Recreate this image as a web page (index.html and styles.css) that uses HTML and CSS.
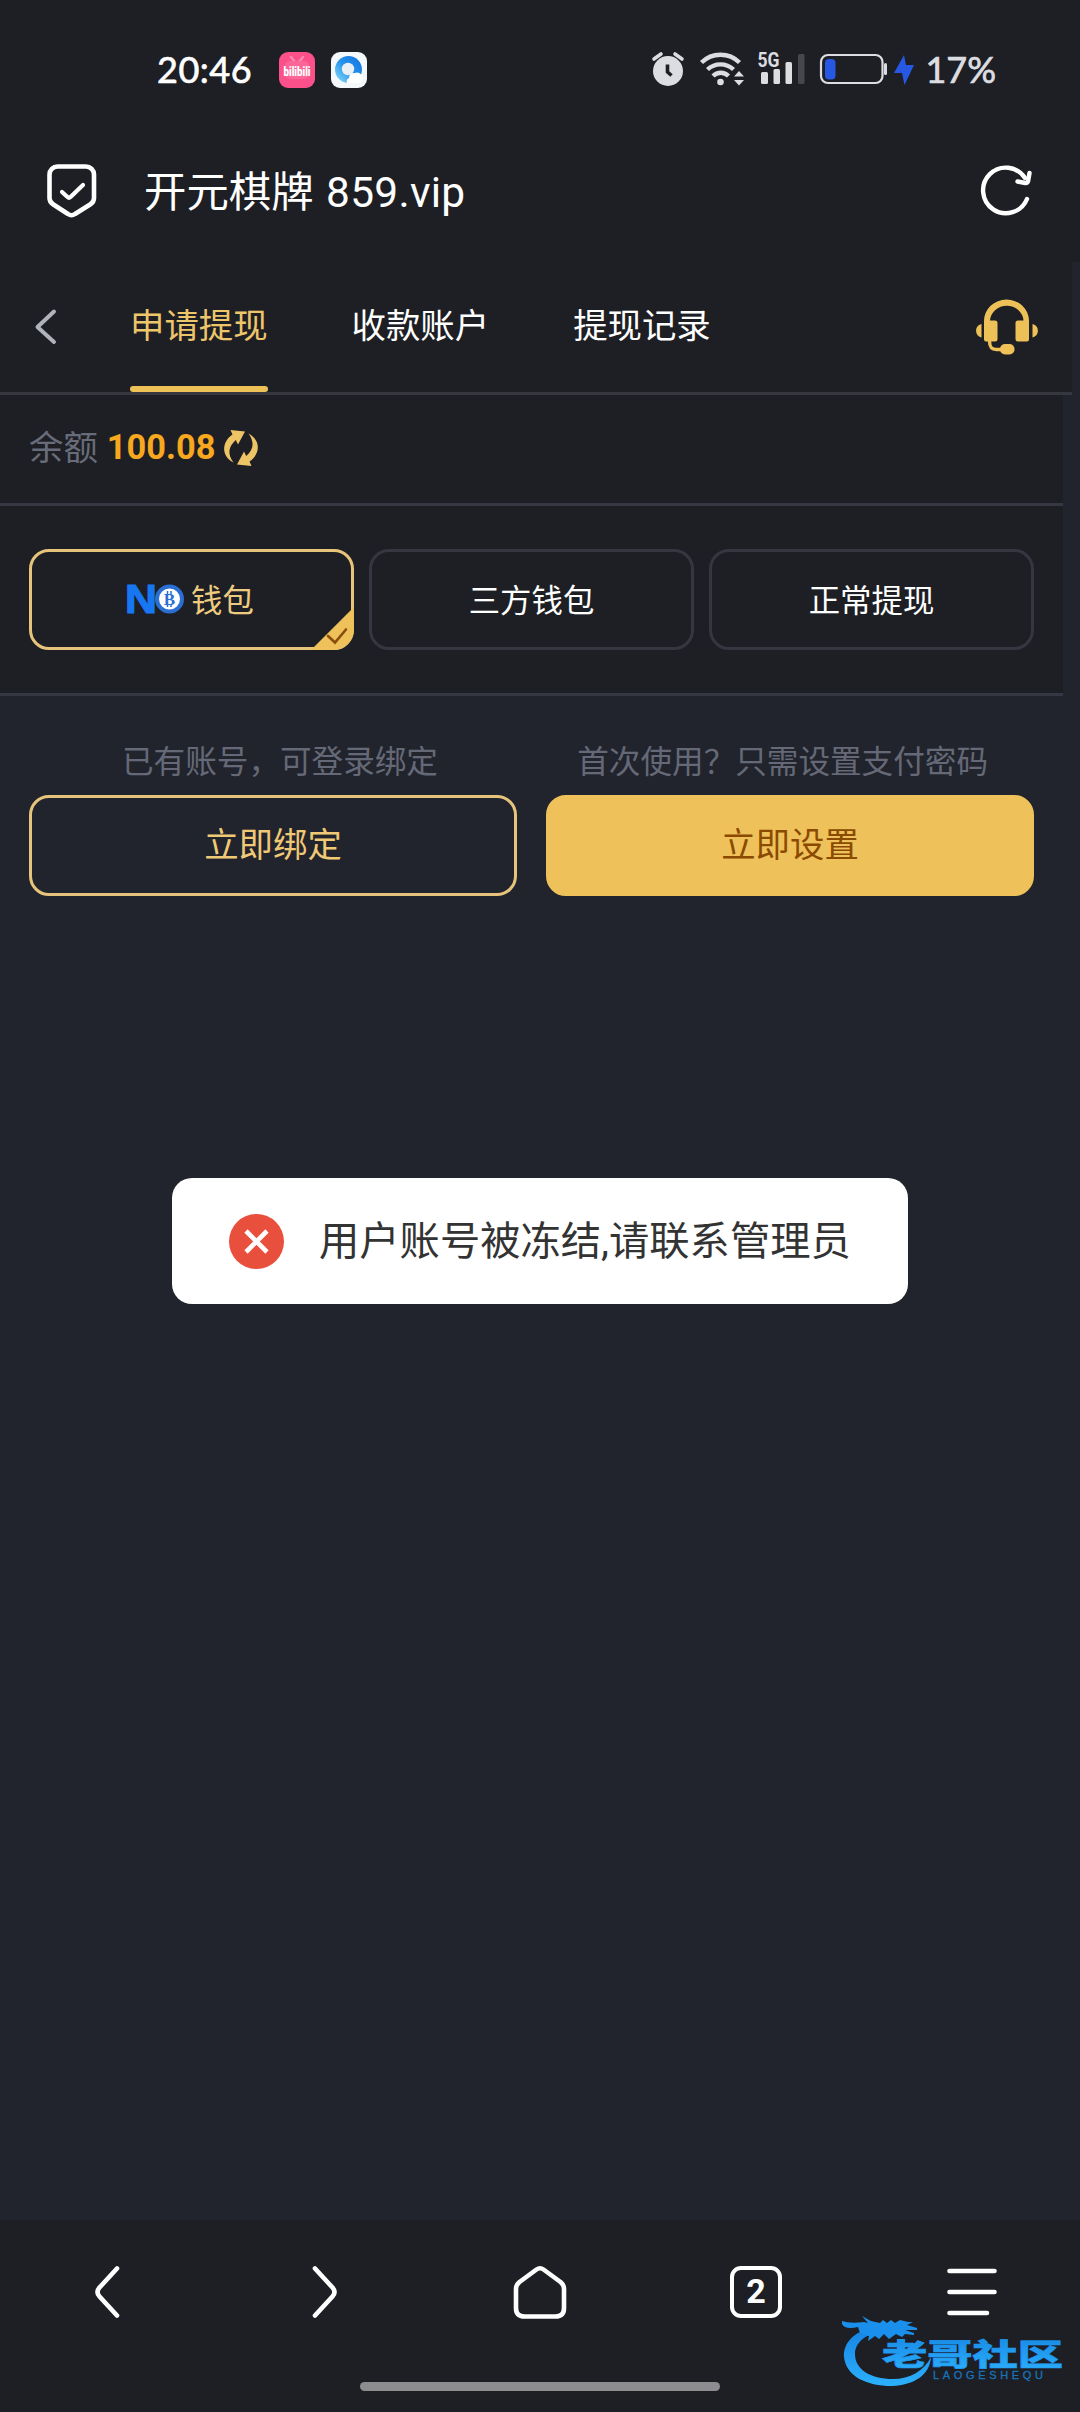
FILE: index.html
```html
<!DOCTYPE html>
<html lang="zh-CN">
<head>
<meta charset="utf-8">
<title>开元棋牌 859.vip</title>
<link rel="stylesheet" href="styles.css">
</head>
<body>
<div class="phone">
  <header class="status">
    <span class="time">20:46</span>
    <svg class="app app-video" width="36" height="36" viewBox="0 0 36 36">
      <rect width="36" height="36" rx="9" fill="#fb5089"/>
      <path d="M12 5l4 5M24 5l-4 5" stroke="#fd8bb0" stroke-width="2.4" stroke-linecap="round"/>
      <rect x="6" y="9" width="24" height="18" rx="5" fill="#fc6598"/>
      <text x="4.5" y="23.500" class="app-text" textLength="27" lengthAdjust="spacingAndGlyphs">bilibili</text>
    </svg>
    <svg class="app" width="36" height="36" viewBox="0 0 36 36">
      <defs><linearGradient id="ring" x1="1" y1="0" x2="0" y2="1"><stop offset="0" stop-color="#126fe0"/><stop offset=".5" stop-color="#2593ea"/><stop offset="1" stop-color="#8fe0fb"/></linearGradient></defs>
      <rect width="36" height="36" rx="9" fill="#f4f8fb"/>
      <circle cx="17.5" cy="17.5" r="13.5" fill="url(#ring)"/>
      <circle cx="17" cy="17" r="6.2" fill="#e8f0f6"/>
      <path d="M16 31a4 4 0 0 1 2-5 5 5 0 0 1 6-5 5 5 0 0 1 7 3c2 3 1 7-2 7z" fill="#fff"/>
    </svg>
    <svg class="indicators" width="240" height="40" viewBox="650 50 240 40">
      <g fill="#dcdde0">
        <circle cx="670" cy="71" r="15"/>
        <path d="M656 59l7-5M684 59l-7-5" stroke="#dcdde0" stroke-width="3.600" stroke-linecap="round"/>
        <path d="M669.500 64.500v7.500l4 3.500" fill="none" stroke="#1e1f24" stroke-width="3.600"/>
        <circle cx="722.500" cy="82" r="3.300"/>
        <path d="M703.500 62.500a27 27 0 0 1 38 0M709.500 69.500a19 19 0 0 1 26 0M715 76a11 11 0 0 1 15.500 0" fill="none" stroke="#dcdde0" stroke-width="4.400"/>
        <path d="M736 76.500l5-5.500 5 5.500zM736 80l5 5.500 5-5.500z"/>
        <rect x="763" y="72" width="7" height="12" rx="1.500"/>
        <rect x="775.500" y="69" width="6.500" height="15" rx="1.500"/>
        <rect x="787.500" y="62" width="6.500" height="22" rx="1.500"/>
        <rect x="800" y="54" width="6.500" height="30" rx="1.500" fill="#46474c"/>
        <text x="759.500" y="67" class="net" textLength="22" lengthAdjust="spacingAndGlyphs">5G</text>
        <rect x="886" y="63" width="3" height="12" rx="1.500"/>
      </g>
      <rect x="823" y="55" width="61.500" height="28" rx="7" fill="none" stroke="#dcdde0" stroke-width="2.200"/>
      <rect x="827" y="59" width="10.500" height="20.500" rx="4" fill="#2758e4"/>
    </svg>
    <svg class="bolt" width="20" height="32" viewBox="0 0 20 32"><path d="M10 1L0 19h8l2.500 12L20 11h-8z" fill="#2758e4"/></svg>
    <span class="percent">17%</span>
  </header>

  <div class="address">
    <svg width="50" height="54" viewBox="0 0 50 54" fill="none" stroke="#fff" stroke-linecap="round" stroke-linejoin="round">
      <path d="M11 2.500H39a8 8 0 0 1 8 8V34q0 4-3.500 6.200L28 50q-3.500 2.500-7 0L6 40.200Q2.500 38 2.500 34V10.500a8 8 0 0 1 8-8z" stroke-width="4.600"/>
      <path d="M15 28l5.500 5q1.500 1.500 3 0L36 21" stroke-width="4.200"/>
    </svg>
    <h1 class="title">开元棋牌 <span class="host">859.vip</span></h1>
    <svg width="52" height="52" viewBox="0 1 52 52" fill="none" stroke="#fff" stroke-width="4.400" stroke-linecap="round" stroke-linejoin="round">
      <path d="M47 35A22.800 22.800 0 1 1 45 14"/>
      <path d="M49.500 9l-1.500 8.500q-.5 1.700-2.500 1.500l-8-1.500"/>
    </svg>
  </div>

  <main class="page">
    <nav class="tabs">
      <svg class="back" width="24" height="36" viewBox="0 0 24 36"><path d="M20 2.500L3.500 18 20 33" fill="none" stroke="#b0b3ba" stroke-width="4" stroke-linecap="round" stroke-linejoin="round"/></svg>
      <span class="tab active">申请提现</span>
      <span class="tab">收款账户</span>
      <span class="tab">提现记录</span>
      <svg class="support" width="62" height="56" viewBox="0 0 62 56" fill="#edc058">
        <path d="M8 22a22.500 21.500 0 0 1 45 0v18.500a2 2 0 0 1-2 2H42a2.500 2.500 0 0 1-2.500-2.500V24A2.500 2.500 0 0 1 42 21.500h5.500a16.800 16 0 0 0-33.500 0H19a2.500 2.500 0 0 1 2.500 2.500v16a2.500 2.500 0 0 1-2.500 2.500h-9a2 2 0 0 1-2-2z"/>
        <path d="M5.500 25v13.500C-1.700 37-1.700 26.500 5.500 25zM56.500 25v13.500c7.200-1.500 7.200-12 0-13.500z"/>
        <path d="M13.500 42c0 7 3 8.500 7 8.500h5" fill="none" stroke="#edc058" stroke-width="3.400"/>
        <rect x="24" y="45" width="14.500" height="10.500" rx="5"/>
      </svg>
    </nav>

    <section class="balance">
      <span class="label">余额</span>
      <strong class="amount">100.08</strong>
      <svg width="35" height="36" viewBox="0 0 35 36" fill="#edc566">
        <path d="M6.500 0l14.500 1.500L14 14.500l-2.200-4.500C4 17 3.500 24 9.500 32.500-3 26 -2.500 12 8.500 4.500z"/>
        <path d="M27.500 36l-14.500-1.500L20 21.500l2.200 4.500C30 19 30.500 12 24.500 3.500 37 10 36.500 24 25.500 31.500z"/>
      </svg>
    </section>

    <section class="wallets">
      <div class="wallet selected">
        <svg class="logo" width="60" height="32" viewBox="-2 -1 60 32">
          <text x="-3" y="29" class="logo-n" textLength="32" lengthAdjust="spacingAndGlyphs">N</text>
          <circle cx="41.500" cy="15" r="12.500" fill="#fff" stroke="#2b6fd4" stroke-width="4"/>
          <text x="41.500" y="21" class="logo-b">B</text>
          <path d="M39.500 7v3M43 7v3M39.500 20v3M43 20v3" stroke="#2b6fd4" stroke-width="1.500"/>
        </svg>
        <span>钱包</span>
        <svg class="corner" width="43" height="43" viewBox="0 0 43 43">
          <path d="M0 43L43 0v22a21 21 0 0 1-21 21z" fill="#efc15b"/>
          <path d="M17 29l7 6.500L35 22.500" fill="none" stroke="#8a4d0b" stroke-width="2.600" stroke-linecap="round"/>
        </svg>
      </div>
      <div class="wallet">三方钱包</div>
      <div class="wallet">正常提现</div>
    </section>

    <section class="account">
      <div class="tips"><span>已有账号，可登录绑定</span><span>首次使用？只需设置支付密码</span></div>
      <div class="actions">
        <button class="btn outline">立即绑定</button>
        <button class="btn solid">立即设置</button>
      </div>
    </section>
  </main>

  <div class="toast" role="alert">
    <svg width="55" height="55" viewBox="0 0 55 55"><circle cx="27.500" cy="27.500" r="27.500" fill="#e94f3d"/><path d="M17 17l21 21M38 17L17 38" stroke="#fff" stroke-width="4.600"/></svg>
    <span class="message">用户账号被冻结,请联系管理员</span>
  </div>

  <footer class="bottom">
    <div class="keys">
      <svg width="52" height="56" viewBox="0 0 52 56"><path d="M35 4.500L17.500 23.500q-4 4.500 0 9L35 51.500"/></svg>
      <svg width="52" height="56" viewBox="0 0 52 56"><path d="M17 4.500L34.500 23.500q4 4.500 0 9L17 51.500"/></svg>
      <svg width="56" height="56" viewBox="0 0 56 56"><path d="M24.500 5.500q3.500-2.500 7 0L48.500 18q3.500 3 3.500 7v19q0 8.500-8.500 8.500H12.500Q4 52.500 4 44V25q0-4 3.500-7z"/></svg>
      <span class="count">2</span>
      <svg width="52" height="56" viewBox="0 0 52 56"><path d="M3.500 7H48.500M3.500 28H48.500M3.500 49H41"/></svg>
    </div>
    <div class="handle"></div>
  </footer>

  <svg class="brand" width="230" height="80" viewBox="840 2310 230 80">
    <defs><linearGradient id="blue" x1="0" y1="0" x2="0" y2="1"><stop offset="0" stop-color="#1583e2"/><stop offset="1" stop-color="#2cb1fc"/></linearGradient></defs>
    <path fill="url(#blue)" d="M872 2328C852 2332 843 2345 844 2357C846 2376 866 2386 892 2386C914 2385 930 2375 931 2357C924 2371 910 2379 893 2379C870 2379 855 2369 855 2354C855 2342 866 2334 884 2330Z"/>
    <path fill="#1a8feb" d="M842 2321q8 3 22 1l4 1-6-7 9 5 9 2 3-3 4 3 4-3 4 3 5-3 8 2h5l-6 3 10 3v2l-12 0 9 3v2l-9-1-3 3-6-3-7 5-5-5-5 5-4-3-7 5 1-5-9-3-2-6q-13 3-16-3z"/>
    <text x="882" y="2364.500" class="brand-cn" textLength="181" lengthAdjust="spacingAndGlyphs">老哥社区</text>
    <text x="933" y="2379" class="brand-en" textLength="110">LAOGESHEQU</text>
  </svg>
</div>
</body>
</html>
```
FILE: styles.css
```css
* { box-sizing: border-box; }
body { margin: 0; background: #1e1f24; }
svg { display: block; flex: none; overflow: visible; }

.phone {
  position: relative;
  display: flex;
  flex-direction: column;
  width: 1080px;
  height: 2412px;
  overflow: hidden;
  background: #1e1f24;
  color: #fff;
  font-family: Roboto, "Noto Sans CJK SC", sans-serif;
}

.status {
  display: flex;
  align-items: center;
  height: 140px;
  padding: 0 84px 0 157px;
}
.time, .percent {
  padding-bottom: 2px;
  font: 400 36px/40px Lato, sans-serif;
  white-space: nowrap;
  -webkit-text-stroke: .7px currentColor;
}
.time { width: 124px; letter-spacing: .5px; }
.percent { margin-left: 11px; color: #dcdde0; }
.app-video { margin-right: 16px; }
.app-text { font: 900 13px Roboto, sans-serif; fill: #fff; }
.indicators { margin-left: 281px; }
.bolt { margin-left: 6px; }
.net { font: 700 20px Roboto, sans-serif; }

.address {
  display: flex;
  align-items: center;
  height: 122px;
  padding: 0 48px 20px 47px;
}
.title {
  flex: 1;
  margin: 0 0 0 47px;
  padding-top: 4px;
  font-size: 42.4px;
  font-weight: 400;
  line-height: 60px;
}
.host { margin-left: 2px; letter-spacing: .3px; }

.page { flex: 1; background: #21242c; }
.tabs {
  display: flex;
  align-items: center;
  width: 1072px;
  height: 133px;
  padding: 0 34px;
  border-bottom: 3px solid #36373f;
  background: #1e1f24;
}
.tab {
  height: 130px;
  margin-right: 84px;
  font-size: 34.4px;
  line-height: 129px;
}
.back { margin-right: 72px; }
.active { position: relative; color: #edc56b; }
.active::after {
  content: "";
  position: absolute;
  right: 0;
  bottom: 0;
  left: 0;
  height: 6px;
  border-radius: 3px;
  background: #edc058;
}
.support { margin-left: auto; }

.balance {
  display: flex;
  align-items: center;
  width: 1063px;
  height: 111px;
  padding: 0 29px 5px;
  border-bottom: 3px solid #353742;
  background: #1e1f24;
  font-size: 34.4px;
}
.balance svg { margin-top: 2px; }
.label { padding-bottom: 4px; color: #686c7a; }
.amount { margin: 0 9px; color: #f7a81f; font-weight: 700; }

.wallets {
  display: grid;
  grid-template-columns: repeat(3, 325px);
  gap: 15px;
  width: 1063px;
  height: 190px;
  padding: 43px 29px;
  border-bottom: 3px solid #353742;
  background: #1e1f24;
}
.wallet {
  position: relative;
  display: flex;
  align-items: center;
  justify-content: center;
  gap: 6px;
  height: 101px;
  padding-bottom: 2px;
  border: 3px solid #353640;
  border-radius: 20px;
  font-size: 31.4px;
}
.selected { gap: 5px; padding-right: 3px; border-color: #e6c47b; color: #edcb80; }
.corner { position: absolute; right: -3px; bottom: -3px; }
.logo-n { font: 700 40px "Liberation Sans", sans-serif; fill: #1777f2; stroke: #1777f2; stroke-width: 1.2px; }
.logo-b { font: 700 17px "Liberation Serif", serif; fill: #2b6fd4; text-anchor: middle; }

.account { width: 1063px; padding: 44px 29px 0; }
.tips {
  display: flex;
  justify-content: space-between;
  height: 55px;
  padding: 0 46px 0 93px;
  color: #656977;
  font-size: 31.6px;
  line-height: 46px;
}
.actions { display: grid; grid-template-columns: 488px 488px; gap: 29px; }
.btn {
  height: 101px;
  padding: 0 0 7px;
  border: 3px solid #e6c47b;
  border-radius: 20px;
  font-family: inherit;
  font-size: 34.4px;
}
.outline { background: none; color: #f0c976; }
.solid { border-color: #efc15b; background: #efc15b; color: #8a4b00; }

.toast {
  position: absolute;
  top: 1178px;
  left: 172px;
  display: flex;
  align-items: center;
  gap: 35px;
  width: 736px;
  height: 126px;
  padding-left: 57px;
  border-radius: 20px;
  background: #fff;
  color: #333;
  font-size: 40.3px;
  white-space: nowrap;
}
.message { padding-bottom: 7px; }

.bottom { height: 192px; background: #1e1f24; }
.keys {
  display: grid;
  grid-template-columns: repeat(5, 216px);
  align-items: center;
  justify-items: center;
  height: 144px;
  fill: none;
  stroke: #fff;
  stroke-width: 4.6px;
  stroke-linecap: round;
  stroke-linejoin: round;
}
.count {
  width: 52px;
  height: 52px;
  border: 4.5px solid #fff;
  border-radius: 11px;
  font-size: 34px;
  font-weight: 700;
  line-height: 43px;
  text-align: center;
}
.handle {
  width: 360px;
  height: 9px;
  margin: 18px auto 0;
  border-radius: 5px;
  background: #8d8d8f;
}
.brand { position: absolute; top: 2310px; left: 840px; }
.brand-cn { font: 900 30px "Noto Sans CJK SC", sans-serif; fill: url(#blue); stroke: #1f97f0; stroke-width: .7px; }
.brand-en { font: 400 11px "Liberation Sans", sans-serif; fill: #1873bb; stroke: #1873bb; stroke-width: .3px; }
```
